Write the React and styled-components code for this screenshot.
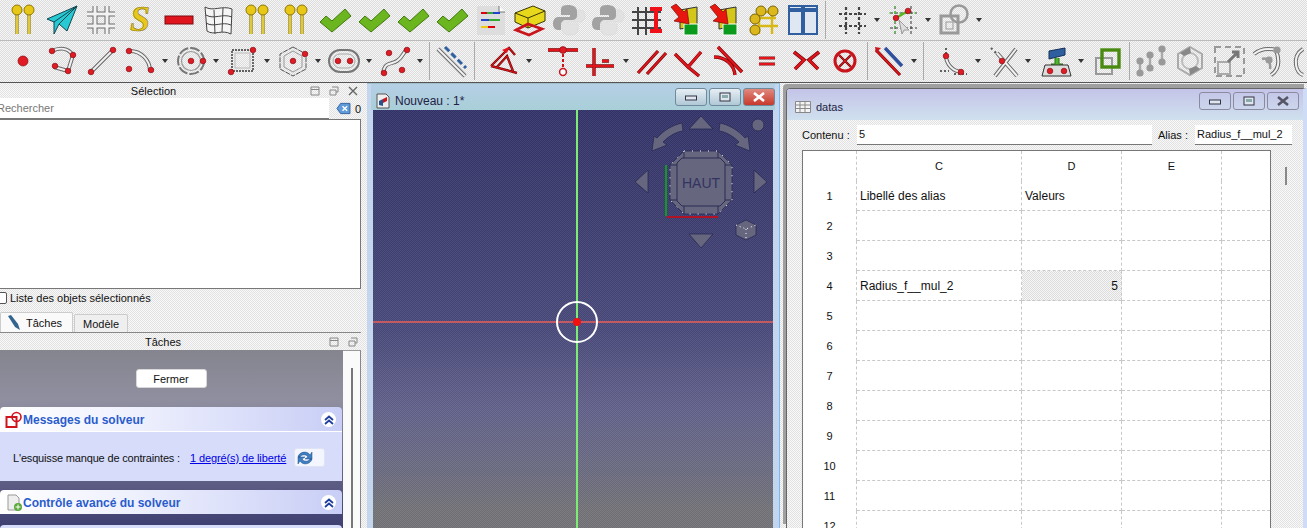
import React from "react";
import styled, { createGlobalStyle, css } from "styled-components";

const dither = (a, b) => css`
    background-color: ${a};
    background-image: repeating-conic-gradient(${a} 0 25%, ${b} 0 50%);
    background-size: 2px 2px;
`;

const GlobalStyle = createGlobalStyle`
    html, body {
        margin: 0;
        padding: 0;
        width: 1307px;
        height: 528px;
        overflow: hidden;
        background: #eee;
    }
    body {
        font-family: "Liberation Sans", Arial, sans-serif;
        font-size: 11px;
        color: #111;
    }
`;

/* small svg helpers */
const Dot = ({ x, y, r = 2.8 }) => <circle cx={x} cy={y} r={r} fill="#e01b24" stroke="#8a0c12" strokeWidth=".7" />;
const Bar = ({ d, w = 3 }) => (
    <>
        <path d={d} fill="none" stroke="#6a6a6a" strokeWidth={w + 1} />
        <path d={d} fill="none" stroke="#f2f2f2" strokeWidth={w - 1} />
    </>
);
const Red = ({ d, w = 3 }) => (
    <>
        <path d={d} fill="none" stroke="#7d0a0a" strokeWidth={w} />
        <path d={d} fill="none" stroke="#e3141c" strokeWidth={w - 1.4} />
    </>
);
const Pin = ({ x, y }) => (
    <>
        <path d={`M${x} ${y}V${y + 24}`} stroke="#a08a10" strokeWidth="3.4" />
        <path d={`M${x} ${y}V${y + 24}`} stroke="#efd84a" strokeWidth="1.6" />
        <circle cx={x} cy={y} r="5" fill="#e9c716" stroke="#8d7708" />
    </>
);

const icons = {
    pins: (
        <>
            <Pin x={10} y={6} />
            <Pin x={22} y={6} />
        </>
    ),
    plane: (
        <>
            <path d="M1 15 31 2 21 27 13 20 8 30 8 18Z" fill="#27c9d3" stroke="#10464f" />
            <path d="M8 18 31 2 13 20" fill="none" stroke="#10464f" />
        </>
    ),
    grid: <Bar w={4} d="M2 10H30M2 22H30M10 2V30M22 2V30" />,
    ess: (
        <text x="16" y="27" textAnchor="middle" fontFamily="Liberation Serif" fontStyle="italic" fontWeight="700" fontSize="36" fill="#e8c81c" stroke="#8a7405" strokeWidth=".6">
            S
        </text>
    ),
    redbar: <rect x="2" y="12" width="28" height="8" fill="#e0141c" stroke="#80090e" />,
    mesh: (
        <path d="M3 3C11 8 20 1 30 5L29 30C20 25 12 32 5 27ZM4 11C12 16 20 9 30 13M4 19C12 24 20 17 29 21M12 6 13 30M21 4 20 28" fill="#f5f5f5" stroke="#444" strokeWidth="1" />
    ),
    check: <path d="M1 18 7 12 13 17 26 5 32 12 13 28Z" fill="#6bb51e" stroke="#3f7a0b" />,
    list: (
        <>
            <path d="M2 2H24L30 8V31H2Z" fill="#ddd" />
            <path d="M24 2V8H30" fill="#fff" stroke="#777" />
            <path d="M6 9H12" stroke="#d01" strokeWidth="2" />
            <path d="M12 9H18" stroke="#3a3" strokeWidth="2" />
            <path d="M18 9H25" stroke="#24c" strokeWidth="2" />
            <path d="M6 16H14" stroke="#24c" strokeWidth="2" />
            <path d="M14 16H25" stroke="#3a3" strokeWidth="2" />
            <path d="M6 23H13" stroke="#ec1" strokeWidth="2" />
            <path d="M13 23H20" stroke="#d01" strokeWidth="2" />
        </>
    ),
    box: (
        <>
            <path d="M1 9 19 2 31 7V17L14 24 1 18Z" fill="#e8d81c" stroke="#3a3505" />
            <path d="M1 9 14 14 31 7M14 14V24" fill="none" stroke="#3a3505" />
            <path d="M2 26 14 20 28 25 15 31Z" fill="none" stroke="#c9141c" strokeWidth="2.6" />
        </>
    ),
    python: (
        <>
            <path d="M17 31C25 31 25 27 25 24V20H15V18H27C30 18 32 15 32 12 32 9 30 6 27 6H25V10C25 13 23 15 20 15H14C11 15 9 17 9 19V25C9 29 12 31 17 31Z" fill="#e2e2e2" stroke="#ddd" />
            <path d="M15 1C8 1 8 4 8 7V11H17V13H5C2 13 0 16 0 20 0 23 2 26 5 26H8V21C8 18 10 16 13 16H19C22 16 24 14 24 12V7C24 3 20 1 15 1Z" fill="#a2a2a2" />
        </>
    ),
    tablei: (
        <>
            <path d="M1 8H30M1 16H30M1 24H30M7 3V31M15 3V31" stroke="#444" strokeWidth="2" />
            <path d="M19 3H31V7H27V25H31V29H19V25H23V7H19Z" fill="#f0101a" />
        </>
    ),
    arrow: (
        <>
            <path d="M10 6 27 3V22L10 25Z" fill="#d3c81a" stroke="#333" />
            <path d="M14 20H28V31H14Z" fill="#0a9a1c" stroke="#fff" />
            <path d="M1 3 6 0 14 8 17 5 19 20 4 17 9 13Z" fill="#e8160f" stroke="#7a0a05" strokeWidth=".7" />
        </>
    ),
    yellowgrid: (
        <>
            <path d="M11 8H30M11 22H30M11 8V30M24 8V30M2 14H28" fill="none" stroke="#d8b814" strokeWidth="2.4" />
            <circle cx="13" cy="7" r="5" fill="#dcb81c" stroke="#7a6608" />
            <circle cx="25" cy="7" r="5" fill="#dcb81c" stroke="#7a6608" />
            <circle cx="7" cy="15" r="5" fill="#dcb81c" stroke="#7a6608" />
            <circle cx="7" cy="26" r="5" fill="#dcb81c" stroke="#7a6608" />
        </>
    ),
    panels: (
        <>
            <rect x="2" y="2" width="13" height="28" fill="#dfe7f2" stroke="#2f5f9e" strokeWidth="2" />
            <rect x="17" y="2" width="13" height="28" fill="#dfe7f2" stroke="#2f5f9e" strokeWidth="2" />
            <path d="M2 6H15M17 6H30" stroke="#2f5f9e" strokeWidth="4" />
        </>
    ),
    dotgrid: <path d="M3 10H30M3 22H30M10 3V30M23 3V30" stroke="#444" strokeWidth="2.2" strokeDasharray="3 2" />,
    snap: (
        <>
            <path d="M3 9H30M3 24H30M8 2V30M24 2V30" stroke="#333" strokeDasharray="3 2" />
            <path d="M8 2V30M2 9H30" stroke="#4ddb3a" strokeDasharray="2 3" />
            <path d="M9 14 21 7" stroke="#5ab51f" strokeWidth="2.6" />
            <Dot x={9} y={14} />
            <Dot x={21} y={7} />
            <path d="M12 16 22 26 17 26 15 30Z" fill="#ddd" stroke="#999" />
        </>
    ),
    overlap: (
        <>
            <rect x="3" y="12" width="17" height="17" fill="none" stroke="#999" strokeWidth="3" />
            <rect x="8" y="18" width="7" height="7" fill="none" stroke="#999" />
            <circle cx="21" cy="10" r="8.5" fill="none" stroke="#999" strokeWidth="2.5" />
        </>
    ),
    point: <Dot x={16} y={16} r={5} />,
    polyline: (
        <>
            <Bar d="M6 6C14 2 22 3 27 10L22 26 8 22" />
            <Dot x={6} y={6} />
            <Dot x={27} y={10} />
            <Dot x={22} y={26} />
            <Dot x={9} y={21} />
        </>
    ),
    line: (
        <>
            <Bar d="M6 27 28 5" />
            <Dot x={6} y={27} />
            <Dot x={28} y={5} />
        </>
    ),
    arc: (
        <>
            <Bar d="M6 6C17 6 26 15 26 26" />
            <Dot x={5} y={6} />
            <Dot x={5} y={24} />
            <Dot x={27} y={25} />
        </>
    ),
    circle: (
        <>
            <circle cx="16" cy="16" r="13" fill="none" stroke="#777" strokeWidth="2" strokeDasharray="10 2" />
            <circle cx="16" cy="16" r="9.5" fill="none" stroke="#999" strokeWidth="1.2" />
            <Dot x={16} y={16} />
            <Dot x={28} y={16} />
        </>
    ),
    rect: (
        <>
            <rect x="6" y="5" width="21" height="21" fill="none" stroke="#333" strokeWidth="1.4" strokeDasharray="2 1" />
            <rect x="9" y="8" width="15" height="15" fill="none" stroke="#bbb" />
            <Dot x={5} y={27} />
            <Dot x={27} y={5} />
        </>
    ),
    hexagon: (
        <>
            <path d="M16 2 29 9V24L16 31 3 24V9Z" fill="none" stroke="#555" strokeDasharray="5 1" />
            <path d="M16 6 25 11V22L16 27 7 22V11Z" fill="none" stroke="#999" />
            <Dot x={16} y={16} />
            <Dot x={28} y={9} />
        </>
    ),
    slot: (
        <>
            <rect x="1" y="5" width="30" height="22" rx="11" fill="none" stroke="#777" strokeWidth="2" />
            <rect x="5" y="9" width="22" height="14" rx="7" fill="none" stroke="#aaa" />
            <Dot x={10} y={16} />
            <Dot x={22} y={16} />
        </>
    ),
    bspline: (
        <>
            <Bar d="M4 28C6 16 12 20 18 16S24 8 28 4" />
            <Dot x={5} y={28} />
            <Dot x={10} y={8} />
            <Dot x={23} y={25} />
            <Dot x={28} y={5} />
        </>
    ),
    constr: (
        <>
            <Bar d="M2 4 29 31" w={3} />
            <path d="M9 2 30 23" stroke="#2f5f9e" strokeWidth="3" strokeDasharray="6 3" />
        </>
    ),
    angle: (
        <>
            <Red d="M3 21 21 3 27 10M3 21 29 28M9 22 19 11 25 26" w={2.4} />
            <path d="M14 5 21 2 19 8Z" fill="#e3141c" />
        </>
    ),
    ptline: (
        <>
            <Red d="M1 5H31" w={3.6} />
            <Dot x={16} y={5} r={3.4} />
            <path d="M16 9V24" stroke="#c9141c" strokeWidth="2" strokeDasharray="3 2" />
            <circle cx="16" cy="27" r="3.4" fill="#fff" stroke="#c9141c" strokeWidth="1.5" />
        </>
    ),
    vh: <Red d="M9 3V31M1 21H29M17 16H24" w={3.4} />,
    parallel: <Red d="M3 28 23 6M12 29 31 8" w={3.2} />,
    perp: <Red d="M3 9 16 22 29 7M16 22 27 31" w={3.4} />,
    tangent: <Red d="M6 2 30 27M2 12C14 12 22 20 23 30" w={3.4} />,
    equal: <Red d="M8 13H24M8 19H24" w={3.2} />,
    symmetric: <Red d="M4 7 14 15 5 24M29 7 19 15 28 24" w={3.6} />,
    block: (
        <>
            <circle cx="16" cy="16" r="10" fill="none" stroke="#c9141c" strokeWidth="3" />
            <Red d="M10 10 22 22M22 10 10 22" w={2.4} />
        </>
    ),
    dims: (
        <>
            <Red d="M3 5 27 30" w={3.2} />
            <path d="M2 2 8 3 3 8Z" fill="#c9141c" />
            <path d="M12 3 29 21" stroke="#2f4f9e" strokeWidth="3.4" />
        </>
    ),
    fillet: (
        <>
            <path d="M9 3V10M17 29H30M3 26 12 26" stroke="#333" strokeDasharray="2 2" strokeWidth="1.5" />
            <Bar d="M9 12C10 20 16 26 24 27" />
            <Dot x={9} y={11} />
            <Dot x={24} y={27} />
        </>
    ),
    trim: (
        <>
            <path d="M4 3 10 9" stroke="#555" strokeDasharray="2 3" strokeWidth="2" />
            <Bar d="M10 8 30 31M29 4 8 31" />
            <Dot x={15} y={16} />
        </>
    ),
    external: (
        <>
            <path d="M9 6 25 3V10L9 14Z" fill="#2f5f9e" stroke="#143058" />
            <path d="M15 13V19H11L17 24 23 19H19V13" fill="#4fb52a" stroke="#2a7010" />
            <path d="M2 31 5 20H28L31 31Z" fill="#ddd" stroke="#333" />
            <Dot x={10} y={26} />
            <Dot x={24} y={26} />
        </>
    ),
    shapes: (
        <>
            <rect x="5" y="13" width="16" height="16" fill="none" stroke="#999" strokeWidth="2" />
            <rect x="11" y="5" width="17" height="17" fill="none" stroke="#4a8a10" strokeWidth="3.4" />
        </>
    ),
    greyChain: (
        <>
            <path d="M5 15V28M15 9V23M27 3V18" stroke="#aaa" strokeWidth="2.4" />
            <circle cx="5" cy="16" r="3.6" fill="#999" />
            <circle cx="5" cy="28" r="3.6" fill="#999" />
            <circle cx="15" cy="10" r="3.6" fill="#999" />
            <circle cx="15" cy="23" r="3.6" fill="#999" />
            <circle cx="27" cy="4" r="3.6" fill="#999" />
            <circle cx="27" cy="17" r="3.6" fill="#999" />
        </>
    ),
    greyRotate: (
        <>
            <path d="M16 2 28 9V23L16 30 4 23V9Z" fill="none" stroke="#aaa" strokeWidth="2" />
            <circle cx="16" cy="16" r="8" fill="none" stroke="#bbb" strokeWidth="2" />
            <path d="M6 8 16 2 17 8 10 11ZM26 24 16 30 15 24 22 21Z" fill="#888" />
        </>
    ),
    greyScale: (
        <>
            <rect x="2" y="2" width="29" height="29" fill="none" stroke="#999" strokeWidth="2" strokeDasharray="6 4" />
            <rect x="5" y="17" width="12" height="12" fill="none" stroke="#aaa" strokeWidth="2" />
            <path d="M15 17 24 8M19 7H25V13" fill="none" stroke="#777" strokeWidth="3" />
        </>
    ),
    greyHook: (
        <>
            <Bar d="M2 9C8 4 16 3 24 5 28 16 27 25 19 30" w={3} />
            <path d="M10 14C16 12 19 18 18 24" fill="none" stroke="#999" strokeWidth="2.5" />
            <circle cx="25" cy="5" r="3.6" fill="#999" />
            <circle cx="17" cy="15" r="3.6" fill="#999" />
        </>
    ),
    greyLoop: <Bar d="M12 4C6 8 4 14 5 20 6 26 9 29 12 30" w={3} />,
};

// [icon, has dropdown, nudge in px from the regular spacing]
const row1 = [
    ["pins"], ["plane"], ["grid"], ["ess"], ["redbar"], ["mesh"], ["pins"], ["pins"],
    ["check"], ["check"], ["check"], ["check"], ["list"], ["box"], ["python"], ["python"],
    ["tablei"], ["arrow"], ["arrow"], ["yellowgrid"], ["panels"], ["|"],
    ["dotgrid", true, 4], ["snap", true], ["overlap", true],
];

const row2 = [
    ["point"], ["polyline"], ["line"], ["arc", true], ["circle", true], ["rect", true],
    ["hexagon", true], ["slot", true], ["bspline", true], ["|"], ["constr"], ["|"],
    ["angle", true, 7], ["ptline", false, 8], ["vh", true, -1], ["parallel", false, -1], ["perp", false, -2],
    ["tangent", false, 1], ["equal"], ["symmetric"], ["block"], ["|"], ["dims", true, -1], ["|"],
    ["fillet", true, 7], ["trim", true, -1], ["external", true, 2], ["shapes"], ["|"],
    ["greyChain", false, -1], ["greyRotate"], ["greyScale"], ["greyHook"], ["greyLoop"],
];

const ToolRow = ({ items, start }) => (
    <Toolbar $start={start}>
        {items.map(([name, drop, nudge], i) =>
            name === "|" ? (
                <ToolSep key={i} />
            ) : (
                <React.Fragment key={i}>
                    <ToolButton $nudge={nudge}>
                        <svg width="32" height="32" viewBox="0 0 32 32">
                            {icons[name]}
                        </svg>
                    </ToolButton>
                    {drop && <DropArrow />}
                </React.Fragment>
            )
        )}
    </Toolbar>
);

const DockButtons = ({ close }) => (
    <DockIcons>
        <svg width="10" height="10" viewBox="0 0 10 10">
            <path d="M1 1H9V9H1ZM1 3.5H9" fill="none" stroke="#888" />
        </svg>
        <svg width="10" height="10" viewBox="0 0 10 10">
            <path d="M3 1H9V6H7M1 4H7V9H1Z" fill="none" stroke="#888" />
        </svg>
        {close && (
            <svg width="10" height="10" viewBox="0 0 10 10">
                <path d="M1 1 9 9M9 1 1 9" stroke="#666" strokeWidth="1.4" />
            </svg>
        )}
    </DockIcons>
);

const Collapse = () => (
    <CollapseBtn>
        <svg width="10" height="10" viewBox="0 0 10 10">
            <path d="M1 5 5 1.5 9 5M1 9 5 5.5 9 9" fill="none" stroke="#1f3f9e" strokeWidth="1.8" />
        </svg>
    </CollapseBtn>
);

const WinControls = ({ $dim }) => (
    <WinBtns $dim={$dim}>
        <WinBtn $dim={$dim}>
            <svg width="12" height="8" viewBox="0 0 12 8">
                <rect x=".5" y="3" width="11" height="4" fill="#dfe6ee" stroke="#334" />
            </svg>
        </WinBtn>
        <WinBtn $dim={$dim}>
            <svg width="12" height="10" viewBox="0 0 12 10">
                <rect x="1" y="1" width="10" height="8" fill="#dfe6ee" stroke="#334" />
                <rect x="3" y="3" width="6" height="3" fill="#8aa" />
            </svg>
        </WinBtn>
        <WinBtn $dim={$dim} $close={!$dim}>
            <svg width="14" height="10" viewBox="0 0 14 10">
                <path d="M2 1 12 9M12 1 2 9" stroke={$dim ? "#556" : "#fff"} strokeWidth="2.6" />
            </svg>
        </WinBtn>
    </WinBtns>
);

const NaviCube = () => (
    <CubeOverlay>
        <svg width="135" height="135" viewBox="0 0 135 135">
            <g fill="#66667f" stroke="#2a2a55" strokeWidth=".8">
                <path d="M54 13 66 0 78 13Z" />
                <path d="M47 7 48 15C40 16 33 21 28 26L32 29 17 35 19 20 22 22C29 14 38 9 47 7Z" />
                <path d="M85 7 84 15C92 16 99 21 104 26L100 29 115 35 113 20 110 22C103 14 94 9 85 7Z" />
                <circle cx="123" cy="9" r="6" />
                <path d="M0 66 13 54V77Z" />
                <path d="M119 54 132 66 119 77Z" />
                <path d="M54 118H78L66 132Z" />
                <path d="M101 109 111 104 121 109V119L111 124 101 119Z" />
                <path d="M49 35H83L97 49V84L83 98H49L35 84V49Z" />
            </g>
            <path d="M47 42H85L90 47V85L85 90H47L42 85V47ZM49 35V42M83 35V42M97 49H90M97 84H90M49 98V90M83 98V90M35 49H42M35 84H42" fill="none" stroke="#2a2a55" />
            <path d="M49 35H83L97 49V84L83 98H49L35 84V49Z" fill="none" stroke="#fff" strokeDasharray="1 7" />
            <path d="M101 109 111 113 121 109M111 113V124" fill="none" stroke="#fff" strokeDasharray="1 3" />
            <path d="M31 49V100" stroke="#119a22" strokeWidth="2" />
            <path d="M32 101H83" stroke="#b01226" strokeWidth="2" />
            <text x="66" y="72" textAnchor="middle" fontFamily="Liberation Sans" fontSize="14" fill="#33335f">
                HAUT
            </text>
        </svg>
    </CubeOverlay>
);

const rows = [
    ["Libellé des alias", "Valeurs"],
    ["", ""],
    ["", ""],
    ["Radius_f__mul_2", "5"],
    ["", ""],
    ["", ""],
    ["", ""],
    ["", ""],
    ["", ""],
    ["", ""],
    ["", ""],
    ["", ""],
];

const App = () => (
    <>
        <GlobalStyle />
        <Page>
            <ToolArea>
                <ToolRow items={row1} start={3} />
                <ToolRow items={row2} start={3} />
            </ToolArea>
            <Main>
                <LeftDock>
                    <DockTitle $height={15}>
                        <DockLabel $width={307}>Sélection</DockLabel>
                        <DockButtons close />
                    </DockTitle>
                    <SearchRow>
                        <SearchInput>Rechercher</SearchInput>
                        <svg width="16" height="13" viewBox="0 0 16 13">
                            <path d="M5 1H15V12H5L1 6.5Z" fill="#5f9bd8" stroke="#2f5f9e" />
                            <path d="M7 4 12 9M12 4 7 9" stroke="#fff" strokeWidth="1.5" />
                        </svg>
                        <Count>0</Count>
                    </SearchRow>
                    <ListBox />
                    <CheckRow>
                        <CheckBox />
                        Liste des objets sélectionnés
                    </CheckRow>
                    <Tabs>
                        <Tab $active>
                            <svg width="16" height="16" viewBox="0 0 16 16">
                                <path d="M2 1 5 0 12 9 14 15 9 12Z" fill="#33648f" />
                            </svg>
                            Tâches
                        </Tab>
                        <Tab>Modèle</Tab>
                    </Tabs>
                    <DockTitle $height={17}>
                        <DockLabel $width={326}>Tâches</DockLabel>
                        <DockButtons />
                    </DockTitle>
                    <TaskArea>
                        <TaskPanel>
                            <CloseRow>
                                <CloseButton>Fermer</CloseButton>
                            </CloseRow>
                            <GroupHeader>
                                <svg width="18" height="18" viewBox="0 0 18 18">
                                    <rect x="1.5" y="6" width="10" height="10" fill="none" stroke="#d0141c" strokeWidth="2" />
                                    <circle cx="11.5" cy="6" r="4.5" fill="none" stroke="#d0141c" strokeWidth="1.6" />
                                </svg>
                                <GroupTitle>Messages du solveur</GroupTitle>
                                <Collapse />
                            </GroupHeader>
                            <GroupBody>
                                <BodyLabel>L'esquisse manque de contraintes :</BodyLabel>
                                <DofLink>1 degré(s) de liberté</DofLink>
                                <RefreshBtn>
                                    <svg width="18" height="18" viewBox="0 0 18 18">
                                        <path d="M2 8C3 3 11 1 14 6L16 3V10H9L12 8C10 5 6 5 4 8ZM16 10C15 15 7 17 4 12L2 15V8H9L6 10C8 13 12 13 14 10Z" fill="#3f7fc0" stroke="#1f4f88" strokeWidth=".5" />
                                    </svg>
                                </RefreshBtn>
                            </GroupBody>
                            <GroupHeader $gap={9}>
                                <svg width="18" height="18" viewBox="0 0 18 18">
                                    <path d="M3 1H11L14 4V16H3Z" fill="#eee" stroke="#999" />
                                    <circle cx="13" cy="13" r="4" fill="#5aa83a" />
                                    <path d="M13 10.5V15.5M10.5 13H15.5" stroke="#fff" />
                                </svg>
                                <GroupTitle>Contrôle avancé du solveur</GroupTitle>
                                <Collapse />
                            </GroupHeader>
                            <NextGroup />
                        </TaskPanel>
                        <TaskScroll>
                            <ScrollLine />
                        </TaskScroll>
                    </TaskArea>
                </LeftDock>

                <ViewWindow>
                    <TitleBar $blue>
                        <svg width="14" height="16" viewBox="0 0 14 16">
                            <path d="M1 1H10L13 4V15H1Z" fill="#eee" stroke="#555" />
                            <path d="M3 8 7 6V13L3 12Z" fill="#24558f" />
                            <path d="M7 6 11 4V8L7 10Z" fill="#d0141c" />
                        </svg>
                        <WinTitle $size={12}>Nouveau : 1*</WinTitle>
                        <WinControls />
                    </TitleBar>
                    <Viewport>
                        <GreenAxis />
                        <RedAxis />
                        <Origin />
                        <OriginDot />
                        <NaviCube />
                    </Viewport>
                </ViewWindow>

                <SheetWindow>
                    <TitleBar>
                        <svg width="16" height="12" viewBox="0 0 16 12">
                            <path d="M.5.5H15.5V11.5H.5ZM.5 4H15.5M.5 7.5H15.5M5 .5V11.5M10 .5V11.5" fill="#f4f4f4" stroke="#888" />
                        </svg>
                        <WinTitle $size={11}>datas</WinTitle>
                        <WinControls $dim />
                    </TitleBar>
                    <SheetBody>
                        <FormulaRow>
                            <FormLabel $width={55}>Contenu :</FormLabel>
                            <FormInput $width={295}>5</FormInput>
                            <FormLabel $width={43} $pad={6}>
                                Alias :
                            </FormLabel>
                            <FormInput $width={97}>Radius_f__mul_2</FormInput>
                        </FormulaRow>
                        <TableRow>
                            <SheetGrid>
                                <HeadCell />
                                <HeadCell>C</HeadCell>
                                <HeadCell>D</HeadCell>
                                <HeadCell>E</HeadCell>
                                <HeadCell />
                                {rows.map((r, i) => (
                                    <React.Fragment key={i}>
                                        <RowHead>{i + 1}</RowHead>
                                        <Cell>{r[0]}</Cell>
                                        <Cell $num={r[1] === "5"}>{r[1]}</Cell>
                                        <Cell />
                                        <Cell />
                                    </React.Fragment>
                                ))}
                            </SheetGrid>
                            <SheetScroll>
                                <SheetThumb />
                            </SheetScroll>
                        </TableRow>
                    </SheetBody>
                </SheetWindow>
            </Main>
        </Page>
    </>
);

const Page = styled.div`
    width: 1307px;
    height: 528px;
    display: flex;
    flex-direction: column;
    overflow: hidden;
`;

const ToolArea = styled.div`
    height: 82px;
    flex: none;
    border-bottom: 1px solid #555;
    ${dither("#dcdcdc", "#f6f6f6")}
`;

const Toolbar = styled.div`
    height: 40px;
    display: flex;
    align-items: center;
    padding-left: ${(p) => p.$start}px;
    border-bottom: 1px solid #bbb;
    &:last-child {
        border-bottom: none;
    }
`;

const ToolButton = styled.div`
    width: 39px;
    height: 36px;
    flex: none;
    margin-left: ${(p) => p.$nudge || 0}px;
    display: flex;
    align-items: center;
    justify-content: center;

    & svg {
        overflow: visible;
    }
`;

const DropArrow = styled.div`
    width: 0;
    height: 0;
    flex: none;
    margin: 0 3px;
    border-left: 3px solid transparent;
    border-right: 3px solid transparent;
    border-top: 4px solid #333;
`;

const ToolSep = styled.div`
    width: 1px;
    height: 38px;
    flex: none;
    margin: 0 2px 0 3px;
    background: #aaa;
`;

const Main = styled.div`
    flex: 1;
    min-height: 0;
    display: flex;
    ${dither("#e2e2e2", "#f8f8f8")}
`;

const LeftDock = styled.div`
    width: 361px;
    flex: none;
    display: flex;
    flex-direction: column;
`;

const DockTitle = styled.div`
    height: ${(p) => p.$height}px;
    flex: none;
    display: flex;
    align-items: center;
`;

const DockLabel = styled.div`
    width: ${(p) => p.$width}px;
    text-align: center;
`;

const DockIcons = styled.div`
    display: flex;
    gap: 9px;
    margin-left: 3px;
`;

const SearchRow = styled.div`
    height: 21px;
    flex: none;
    display: flex;
    align-items: center;
    gap: 4px;
`;

const SearchInput = styled.div`
    width: 332px;
    height: 20px;
    line-height: 20px;
    margin-left: -3px;
    margin-right: 3px;
    flex: none;
    background: #fff;
    border-bottom: 1px solid #777;
    color: #777;
`;

const Count = styled.span`
    font-size: 11px;
`;

const ListBox = styled.div`
    height: 168px;
    flex: none;
    background: #fff;
    border: 1px solid #777;
    border-left: none;
`;

const CheckRow = styled.div`
    height: 18px;
    flex: none;
    display: flex;
    align-items: center;
    gap: 3px;
    margin-left: -5px;
`;

const CheckBox = styled.span`
    width: 10px;
    height: 10px;
    border: 1px solid #555;
    border-radius: 2px;
    background: #fff;
`;

const Tabs = styled.div`
    height: 20px;
    margin-top: 5px;
    flex: none;
    display: flex;
    align-items: flex-end;
    gap: 1px;
    border-bottom: 1px solid #888;
`;

const Tab = styled.div`
    height: ${(p) => (p.$active ? 20 : 18)}px;
    padding: ${(p) => (p.$active ? "0 10px 0 5px" : "0 8px")};
    display: flex;
    align-items: center;
    gap: 4px;
    box-sizing: border-box;
    background: ${(p) => (p.$active ? "#fafafa" : "#efefef")};
    border: 1px solid #ccc;
    border-bottom: none;
    border-radius: 2px 2px 0 0;
`;

const TaskArea = styled.div`
    flex: 1;
    min-height: 0;
    display: flex;
`;

const TaskPanel = styled.div`
    width: 343px;
    flex: none;
    padding-right: 1px;
    box-sizing: border-box;
    overflow: hidden;
    background: linear-gradient(#85858f 0, #8f8fa0 50px, #5f5f85 130px, #3c3c70 180px);
`;

const CloseRow = styled.div`
    height: 57px;
    display: flex;
    justify-content: center;
    align-items: flex-start;
    padding-top: 19px;
    box-sizing: border-box;
`;

const CloseButton = styled.div`
    width: 71px;
    height: 19px;
    line-height: 19px;
    text-align: center;
    background: #fff;
    border-radius: 3px;
    border: 1px solid #d8d8d8;
    box-sizing: border-box;
`;

const GroupHeader = styled.div`
    height: 24px;
    margin-top: ${(p) => p.$gap || 0}px;
    display: flex;
    align-items: center;
    gap: 0;
    padding: 1px 5px 0;
    box-sizing: border-box;
    border-radius: 4px 4px 0 0;
    background: linear-gradient(90deg, #fff 0, #eef0fd 40%, #c8cef6 100%);
`;

const GroupTitle = styled.div`
    flex: 1;
    font-weight: 700;
    font-size: 12px;
    color: #2a5ccc;
`;

const CollapseBtn = styled.div`
    width: 15px;
    height: 15px;
    border-radius: 50%;
    background: #fff;
    display: flex;
    align-items: center;
    justify-content: center;
    margin-right: 1px;
`;

const GroupBody = styled.div`
    height: 50px;
    box-sizing: border-box;
    display: flex;
    align-items: center;
    padding: 2px 0 0 13px;
    background: #d6dcfa;
    border-top: 1px solid #fff;
`;

const BodyLabel = styled.span`
    letter-spacing: -0.17px;
`;

const DofLink = styled.span`
    color: #0000e6;
    letter-spacing: -0.1px;
    text-decoration: underline;
    margin-left: 10px;
`;

const RefreshBtn = styled.div`
    width: 31px;
    height: 19px;
    margin-left: 8px;
    display: flex;
    align-items: center;
    padding-left: 1px;
    box-sizing: border-box;
    background: #f4f6ff;
    border-radius: 3px;
    border: 1px solid #dfe3f4;
`;

const NextGroup = styled.div`
    height: 12px;
    margin-top: 11px;
    border-radius: 4px 4px 0 0;
    background: #d6dcfa;
`;

const TaskScroll = styled.div`
    flex: 1;
    display: flex;
    justify-content: center;
    padding-top: 17px;
    background: #fafafa;
    border-top: 1px solid #999;
    border-right: 1px solid #888;
`;

const ScrollLine = styled.div`
    width: 2px;
    background: #777;
`;

const ViewWindow = styled.div`
    width: 413px;
    margin-left: 6px;
    flex: none;
    display: flex;
    flex-direction: column;
    padding: 0 6px;
    box-sizing: border-box;
    background: #c4d6ee;
    border-top: 1px solid #9fc0c8;
    border-right: 1px solid #7ab8f0;
`;

const TitleBar = styled.div`
    height: ${(p) => (p.$blue ? 26 : 31)}px;
    flex: none;
    display: flex;
    align-items: center;
    gap: 5px;
    box-sizing: border-box;
    ${(p) =>
        p.$blue
            ? css`
                  margin: 0 -2px;
                  padding: 8px 0 0 5px;
                  background: linear-gradient(#b6cfe6, #a9cfd8);
              `
            : css`
                  padding: 5px 4px 0 8px;
                  background: linear-gradient(#c4c4e8, #cfe0ee);
              `}
`;

const WinTitle = styled.div`
    flex: 1;
    font-size: ${(p) => p.$size}px;
    color: #222244;
`;

const WinBtns = styled.div`
    display: flex;
    gap: 2px;
    margin-top: ${(p) => (p.$dim ? -12 : -8)}px;
`;

const WinBtn = styled.div`
    width: 32px;
    height: 18px;
    box-sizing: border-box;
    display: flex;
    align-items: center;
    justify-content: center;
    border-radius: 3px;
    border: 1px solid ${(p) => (p.$dim ? "#8a8aa0" : "#6f8a9a")};
    background: ${(p) =>
        p.$close
            ? "linear-gradient(#e08a80, #c8392c)"
            : p.$dim
            ? "transparent"
            : "linear-gradient(#e6eef4, #b0c8d6)"};
`;

const Viewport = styled.div`
    position: relative;
    flex: 1;
    overflow: hidden;
    background-image: repeating-conic-gradient(rgba(255, 255, 255, 0.07) 0 25%, rgba(0, 0, 0, 0.05) 0 50%),
        linear-gradient(#33336a 0, #3c3c70 100px, #4a4a7c 220px, #62628c 300px, #6a6a84 350px, #737378 400px);
    background-size: 2px 2px, 100% 100%;
`;

const GreenAxis = styled.div`
    position: absolute;
    left: 203px;
    top: 0;
    bottom: 0;
    width: 2px;
    background: #7dec72;
`;

const RedAxis = styled.div`
    position: absolute;
    left: 0;
    right: 0;
    top: 211px;
    height: 2px;
    background: #c25a64;
`;

const Origin = styled.div`
    position: absolute;
    left: 183px;
    top: 191px;
    width: 38px;
    height: 38px;
    border: 2px solid #fff;
    border-radius: 50%;
`;

const OriginDot = styled.div`
    position: absolute;
    left: 200px;
    top: 208px;
    width: 8px;
    height: 8px;
    border-radius: 50%;
    background: #f01010;
`;

const CubeOverlay = styled.div`
    position: absolute;
    left: 262px;
    top: 6px;
    width: 135px;
    height: 135px;
`;

const SheetWindow = styled.div`
    flex: 1;
    min-width: 0;
    margin-left: 6px;
    margin-top: 5px;
    display: flex;
    flex-direction: column;
    border-left: 1px solid #666;
    border-top: 1px solid #666;
    border-right: 4px solid #cfdcf5;
    border-radius: 4px 0 0 0;
    box-shadow: -3px -4px 0 #a0a0a0;
    overflow: hidden;
`;

const SheetBody = styled.div`
    flex: 1;
    min-height: 0;
    display: flex;
    flex-direction: column;
    padding: 5px 0 0 15px;
`;

const FormulaRow = styled.div`
    height: 20px;
    flex: none;
    display: flex;
    align-items: center;
`;

const FormLabel = styled.div`
    width: ${(p) => p.$width}px;
    padding-left: ${(p) => p.$pad || 0}px;
    box-sizing: border-box;
    flex: none;
`;

const FormInput = styled.div`
    width: ${(p) => p.$width}px;
    height: 20px;
    line-height: 19px;
    padding-left: 2px;
    box-sizing: border-box;
    flex: none;
    background: #fff;
    border-bottom: 1px solid #777;
`;

const TableRow = styled.div`
    flex: 1;
    min-height: 0;
    margin-top: 5px;
    display: flex;
`;

const SheetGrid = styled.div`
    width: 469px;
    height: 380px;
    flex: none;
    display: grid;
    grid-template-columns: 54px 165px 100px 100px 1fr;
    grid-auto-rows: 30px;
    background: #fff;
    border: 1px solid #777;
    border-bottom: none;
    box-sizing: border-box;
`;

const HeadCell = styled.div`
    display: flex;
    align-items: center;
    justify-content: center;
    border-right: 1px dashed #c8c8c8;
    &:nth-child(5) {
        border-right: none;
    }
`;

const RowHead = styled.div`
    display: flex;
    align-items: center;
    justify-content: center;
    border-right: 1px dashed #c8c8c8;
`;

const Cell = styled.div`
    display: flex;
    align-items: center;
    padding: 0 3px;
    font-size: 12px;
    box-sizing: border-box;
    border-right: 1px dashed #c8c8c8;
    border-bottom: 1px dashed #c8c8c8;
    ${(p) =>
        p.$num &&
        css`
            justify-content: flex-end;
            ${dither("#dcdcdc", "#f6f6f6")}
        `}
    &:nth-child(5n) {
        border-right: none;
    }
`;

const SheetScroll = styled.div`
    flex: 1;
    padding: 17px 0 0 14px;
`;

const SheetThumb = styled.div`
    width: 2px;
    height: 18px;
    background: #888;
`;

export default App;
